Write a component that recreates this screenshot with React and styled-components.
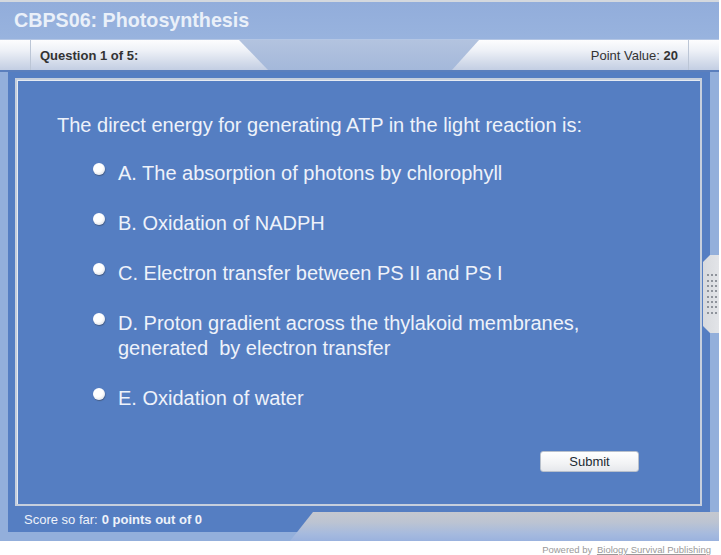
import React from "react";
import styled, { createGlobalStyle } from "styled-components";

const Global = createGlobalStyle`
  html, body { margin: 0; padding: 0; background: #ffffff; }
  body { font-family: "Liberation Sans", Arial, sans-serif; }
`;

const Frame = styled.div`
  position: relative;
  width: 719px;
  height: 541px;
  display: flex;
  flex-direction: column;
  background: #93afdb;
  border-top: 2px solid #d4d8de;
  box-sizing: border-box;
  overflow: hidden;
`;

const TitleBar = styled.div`
  height: 37px;
  display: flex;
  align-items: center;
  padding-left: 14px;
  background: linear-gradient(#92addb, #98b3de);
  border-bottom: 1px solid #b4c6e4;
  color: #eaf0f9;
  font-size: 19.7px;
  font-weight: bold;
`;

const TabBar = styled.div`
  height: 30px;
  display: flex;
  background: linear-gradient(#b3c3df, #a4b8da);
  border-bottom: 2px solid #5b7fbd;
`;

const lightTab = `
  background: linear-gradient(#fdfdfe 0%, #eef1f7 35%, #d3dbea 75%, #c3cee3 100%);
`;

const Cap = styled.div`
  width: ${(p) => p.$w}px;
  ${lightTab}
  box-sizing: border-box;
  ${(p) => (p.$side === "left" ? "border-right" : "border-left")}: 1px solid #bcc6d6;
`;

const Tab = styled.div`
  width: ${(p) => p.$w}px;
  ${lightTab}
  display: flex;
  align-items: center;
  box-sizing: border-box;
  font-size: 13px;
  color: #333333;
  clip-path: ${(p) =>
    p.$side === "left"
      ? "polygon(0 0, calc(100% - 29px) 0, 100% 100%, 0 100%)"
      : "polygon(27px 0, 100% 0, 100% 100%, 0 100%)"};
  padding-left: ${(p) => (p.$side === "left" ? "9px" : "0")};
  justify-content: ${(p) => (p.$side === "left" ? "flex-start" : "flex-end")};
  padding-right: ${(p) => (p.$side === "left" ? "0" : "10px")};
  b { font-weight: bold; }
`;

const Spacer = styled.div`
  flex: 1;
`;

const Body = styled.div`
  flex: 1;
  display: flex;
`;

const Strip = styled.div`
  width: ${(p) => p.$w}px;
  position: relative;
`;

const Panel = styled.div`
  flex: 1;
  display: flex;
  flex-direction: column;
  background: #557ec2;
  padding: 6px 8px 0 7px;
  margin-bottom: 9px;
`;

const QuestionBox = styled.div`
  position: relative;
  flex: 1;
  border: 2px solid #c6cfdd;
  box-shadow: inset 1px 1px 0 #e6ebf2;
  padding: 34px 0 0 40px;
  color: #eef2fa;
  font-size: 20px;
`;

const Prompt = styled.div`
  line-height: 22px;
  margin-bottom: 25px;
`;

const Options = styled.ul`
  list-style: none;
  margin: 0;
  padding: 0 0 0 36px;
  display: flex;
  flex-direction: column;
  gap: 25px;
`;

const Option = styled.li`
  display: flex;
  align-items: flex-start;
  line-height: 25px;
`;

const Radio = styled.span`
  flex: none;
  width: 12px;
  height: 12px;
  margin: 2px 13px 0 0;
  border-radius: 50%;
  background: radial-gradient(circle at 40% 35%, #ffffff 45%, #e4e6ea 75%, #a9adb4 100%);
  box-shadow: 0.5px 1px 1px rgba(60, 70, 90, 0.6);
`;

const SubmitButton = styled.button`
  position: absolute;
  right: 61px;
  bottom: 32px;
  width: 99px;
  height: 21px;
  border: 1px solid #b8c0cc;
  border-radius: 3px;
  background: linear-gradient(#ffffff, #f2f3f5 60%, #e6e8ec);
  font-family: "Liberation Sans", Arial, sans-serif;
  font-size: 13px;
  color: #1a2a33;
  padding: 0;
  cursor: pointer;
`;

const ScoreRow = styled.div`
  height: 26px;
  display: flex;
  align-items: center;
  padding-left: 9px;
  color: #eef2fa;
  font-size: 13px;
  b { font-weight: bold; margin-left: 4px; }
`;

const BottomTab = styled.div`
  position: absolute;
  left: 290px;
  right: 0;
  bottom: 0;
  height: 29px;
  background: linear-gradient(#c5c8cf 0%, #bcc4d2 35%, #a6bade 75%, #9ab2de 100%);
  clip-path: polygon(23px 0, 100% 0, 100% 100%, 0 100%);
`;

const Handle = styled.div`
  position: absolute;
  right: 0;
  top: 183px;
  width: 16px;
  height: 78px;
  background: linear-gradient(90deg, #d8dade, #e2e4e8);
  clip-path: polygon(7px 0, 100% 0, 100% 100%, 7px 100%, 0 calc(100% - 7px), 0 7px);
  display: grid;
  grid-template-columns: repeat(3, 2px);
  grid-auto-rows: 2px;
  column-gap: 2px;
  row-gap: 3.3px;
  align-content: center;
  justify-content: center;
  padding-left: 2px;
  box-sizing: border-box;
`;

const Dot = styled.span`
  background: #8e939b;
`;

const Powered = styled.div`
  width: 711px;
  text-align: right;
  font-family: "Liberation Sans", Arial, sans-serif;
  font-size: 9.5px;
  color: #9a9a9a;
  margin-top: 3px;
  a { color: #9a9a9a; text-decoration: underline; margin-left: 2px; }
`;

const options = [
  ["A. The absorption of photons by chlorophyll"],
  ["B. Oxidation of NADPH"],
  ["C. Electron transfer between PS II and PS I"],
  ["D. Proton gradient across the thylakoid membranes,", "generated  by electron transfer"],
  ["E. Oxidation of water"],
];

export default function App() {
  return (
    <>
      <Global />
      <Frame>
        <TitleBar>CBPS06: Photosynthesis</TitleBar>
        <TabBar>
          <Cap $w={31} $side="left" />
          <Tab $w={237} $side="left">
            <b>Question 1 of 5:</b>
          </Tab>
          <Spacer />
          <Tab $w={236} $side="right">
            Point Value:&nbsp;<b>20</b>
          </Tab>
          <Cap $w={31} $side="right" />
        </TabBar>
        <Body>
          <Strip $w={8} />
          <Panel>
            <QuestionBox>
              <Prompt>The direct energy for generating ATP in the light reaction is:</Prompt>
              <Options>
                {options.map((lines, i) => (
                  <Option key={i}>
                    <Radio />
                    <div>
                      {lines.map((l, j) => (
                        <div key={j} style={{ whiteSpace: "pre" }}>{l}</div>
                      ))}
                    </div>
                  </Option>
                ))}
              </Options>
              <SubmitButton>Submit</SubmitButton>
            </QuestionBox>
            <ScoreRow>
              Score so far: <b>0 points out of 0</b>
            </ScoreRow>
          </Panel>
          <Strip $w={9}>
            <Handle>
              {Array.from({ length: 24 }).map((_, i) => (
                <Dot key={i} />
              ))}
            </Handle>
          </Strip>
        </Body>
        <BottomTab />
      </Frame>
      <Powered>
        Powered by <a href="#">Biology Survival Publishing</a>
      </Powered>
    </>
  );
}
